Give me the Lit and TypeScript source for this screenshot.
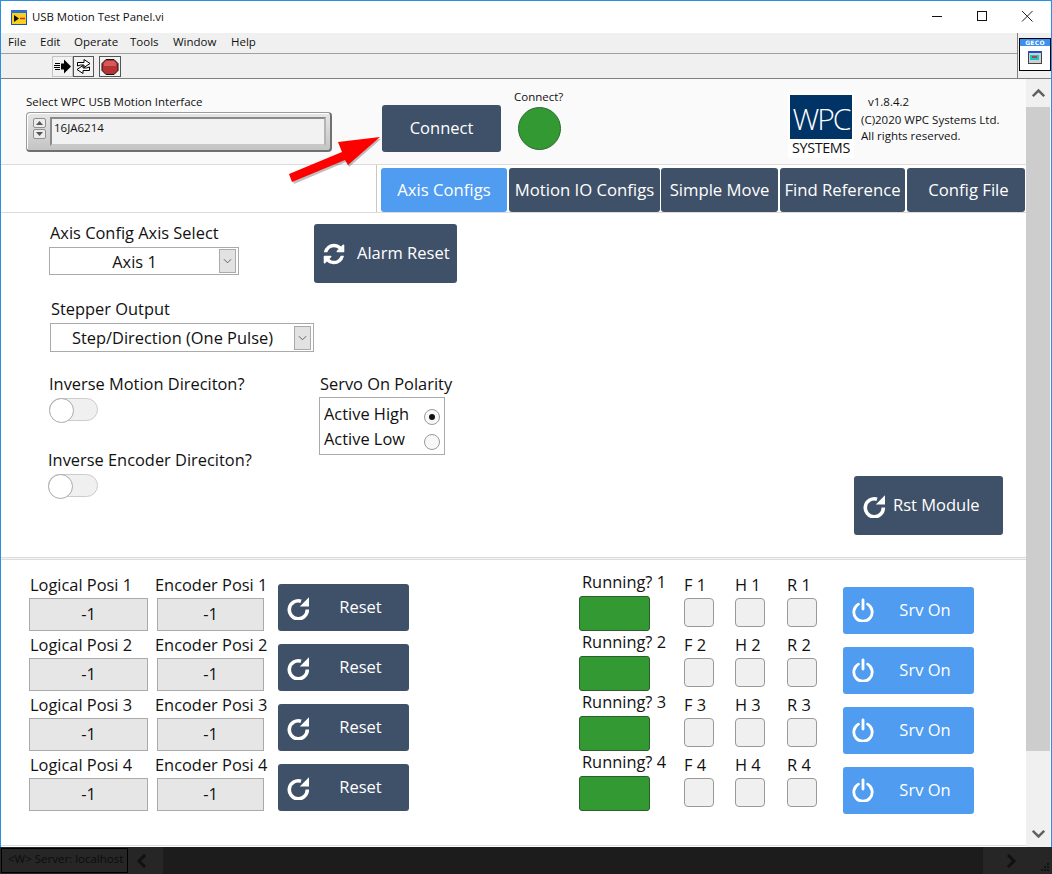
import { LitElement, html, css } from "lit";
import { customElement } from "lit/decorators.js";

const SYNC = "M1639 1056q0 5-1 7-64 268-268 434.5t-478 166.5q-146 0-282.5-55t-243.5-157l-129 129q-19 19-45 19t-45-19-19-45v-448q0-26 19-45t45-19h448q26 0 45 19t19 45-19 45l-137 137q71 66 161 102t187 36q134 0 250-65t186-179q11-17 53-117 8-23 30-23h192q13 0 22.5 9.5t9.5 22.5zm25-800v448q0 26-19 45t-45 19h-448q-26 0-45-19t-19-45 19-45l138-138q-148-137-349-137-134 0-250 65t-186 179q-11 17-53 117-8 23-30 23h-199q-13 0-22.5-9.5t-9.5-22.5v-7q65-268 270-434.5t480-166.5q146 0 284 55.5t245 156.5l130-129q19-19 45-19t45 19 19 45z";

const syncIcon = html`<svg class="ico-sync" viewBox="0 0 1792 1792" fill="#fff"><path d=${SYNC}></path></svg>`;
const repeatIcon = html`<svg class="ico-rep" viewBox="0 0 23 24"><path d="M20.3 13.5A9 9 0 1 1 14 5.2" fill="none" stroke="#fff" stroke-width="3.6"></path><path d="M22 1.2V10.5H12.8z" fill="#fff"></path></svg>`;
const powerIcon = html`<svg class="ico-power" viewBox="0 0 24 26" fill="none" stroke="#fff" stroke-width="3.1" stroke-linecap="round"><path d="M7 6.6a10 10 0 1 0 10 0"></path><path d="M12 2v10"></path></svg>`;
const chev = (pts: string, cls: string) => html`<svg class=${cls} viewBox="0 0 16 12" fill="none" stroke-width="3"><polyline points=${pts}></polyline></svg>`;

const SEL = html`<span class="sel-arrow"><svg viewBox="0 0 10 6" width="9" height="6" fill="none" stroke="#555" stroke-width="1"><polyline points="1,1 5,5 9,1"></polyline></svg></span>`;

@customElement("app-root")
export class AppRoot extends LitElement {
  static styles = css`
    :host { display: block; position: relative; width: 1052px; height: 874px; overflow: hidden; background: #fff;
      font-family: "Open Sans", "Noto Sans", sans-serif; color: #111; font-size: 16.4px; }
    * { box-sizing: border-box; }
    .app { display: flex; flex-direction: column; height: 874px; }
    .win { height: 847px; flex: none; border: 1px solid #2b8fe3; border-bottom: 0; display: flex; flex-direction: column; }

    .title { height: 32px; flex: none; display: flex; align-items: center; background: #fff; padding-left: 10px; }
    .title .app-ico { width: 16px; height: 16px; flex: none; }
    .title .name { margin-left: 5px; font-size: 11.4px; line-height: 16px; }
    .winbtns { margin-left: auto; display: flex; }
    .winbtns svg { width: 45px; height: 32px; display: block; }

    .bars { display: flex; flex: none; height: 46px; background: #f0f0f0; border-bottom: 1px solid #808080; }
    .bars-main { flex: 1; display: flex; flex-direction: column; }
    .menu { height: 21px; border-bottom: 1px solid #a0a0a0; display: grid; grid-template-columns: 32px 34px 56px 43px 58px auto; padding-left: 7px; font-size: 11.5px; line-height: 18px; }
    .tools { flex: 1; display: flex; padding: 2px 0 0 51px; }
    .tools .tb { height: 22px; display: block; }
    .geco-wrap { width: 34px; border-left: 1px solid #808080; padding: 5px 0 0 1px; flex: none; }
    .geco { width: 32px; height: 33px; border: 1px solid #000; background: #fff; display: flex; flex-direction: column; align-items: center; }
    .geco-h { width: 100%; height: 7px; background: #3a8ff0; color: #fff; font: bold 6px/7px "DejaVu Sans", sans-serif; text-align: center; letter-spacing: .3px; overflow: hidden; }
    .geco svg { margin-top: 5px; }

    .main { flex: 1; display: flex; min-height: 0; }
    .content { width: 1025px; flex: none; display: flex; flex-direction: column; background: #fff; }

    .head { height: 86px; flex: none; background: #fafafa; border-bottom: 1px solid #dcdcdc; display: flex; align-items: flex-start; padding-left: 25px; }
    .small { font-size: 11.5px; line-height: 16px; }
    .ring-block { width: 306px; margin-top: 15px; }
    .ring-label { height: 18px; line-height: 15px; white-space: nowrap; }
    .ring { height: 40px; border-radius: 4px; background: linear-gradient(180deg, #e6e6e6, #c4c4c4); border: 1px solid #9a9a9a; border-right: 2px solid #707070; border-bottom: 2px solid #707070; box-shadow: inset 1px 1px 0 #fff; display: flex; padding: 4px 4px 4px 6px; }
    .spin { width: 13px; display: flex; flex-direction: column; gap: 1px; margin-top: 1px; flex: none; }
    .spin span { width: 13px; height: 10px; background: #ececec; border: 1px solid #8f8f8f; border-radius: 2px; display: flex; align-items: center; justify-content: center; }
    .ring-input { flex: 1; margin-left: 4px; background: #f2f2f2; border: 2px solid #8a8a8a; border-right-color: #b5b5b5; border-bottom-color: #c8c8c8; padding: 1px 0 0 2px; height: 29px; line-height: 16px; }

    .btn { background: #3f5168; border-radius: 3px; color: #fff; display: flex; align-items: center; flex: none; font-weight: 500; font-size: 16.5px; white-space: nowrap; }
    .btn span { margin-bottom: 2px; }
    .connect { width: 119px; height: 47px; margin: 26px 0 0 50px; justify-content: center; }
    .led-block { width: 52px; margin: 9px 0 0 13px; flex: none; }
    .led-label { height: 18px; white-space: nowrap; line-height: 18px; }
    .led { width: 43px; height: 43px; border-radius: 50%; background: #339933; border: 1px solid #2b6b2b; margin: 1px 0 0 4px; }
    .logo { width: 66px; height: 66px; flex: none; margin: 13px 0 0 222px; background: #fff; padding: 3px 2px 0; }
    .logo-box { height: 44px; background: #003366; color: #fff; font: 300 30px/48px "Open Sans", sans-serif; letter-spacing: -2px; text-align: center; white-space: nowrap; overflow: hidden; }
    .logo-sub { text-align: center; font-size: 14.4px; line-height: 18px; letter-spacing: -.4px; white-space: nowrap; }
    .info { margin: 15px 0 0 7px; white-space: nowrap; }
    .info div { height: 16px; }
    .info .ver { padding-left: 7px; height: 18px; }

    .tabs { height: 48px; flex: none; display: flex; background: #fff; border-bottom: 1px solid #dcdcdc; }
    .tab-gap { width: 376px; flex: none; border-right: 1px solid #c8c8c8; margin-right: 4px; }
    .tab-list { display: flex; padding-top: 3px; }
    .tab { height: 44px; background: #3f5168; color: #fff; border-radius: 3px; display: flex; align-items: center; justify-content: center; font-size: 16.7px; font-weight: 500; white-space: nowrap; padding-bottom: 2px; }
    .tab.on { background: #4f9cf0; }
    .tab:last-child { padding-left: 5px; }

    .body { height: 344px; flex: none; padding: 11px 23px 0 48px; display: flex; flex-direction: column; }
    .row-a { display: flex; height: 59px; flex: none; }
    .lbl { height: 23px; line-height: 19px; white-space: nowrap; }
    .row-a .lbl { line-height: 17px; padding-left: 1px; }
    .axis { width: 190px; flex: none; }
    .select { height: 28px; border: 1px solid #aaa; background: #fff; display: flex; align-items: center; padding-right: 2px; white-space: nowrap; }
    .select-text { flex: 1; text-align: center; }
    .sel-arrow { width: 17px; height: 24px; background: #e2e2e2; border: 1px solid #aaa; display: flex; align-items: center; justify-content: center; flex: none; }
    .alarm { width: 143px; height: 59px; margin-left: 75px; padding-left: 8px; }
    .alarm span { margin-bottom: 2px; }
    .ico-sync { width: 24px; height: 24px; margin-right: 11px; flex: none; }
    .row-b { margin: 16px 0 0 1px; width: 264px; flex: none; }
    .row-b .lbl { height: 24px; padding-left: 1px; }
    .row-b .select { height: 29px; }
    .row-c { display: flex; margin-top: 21px; flex: none; }
    .col-l { width: 270px; flex: none; }
    .col-l .lbl { height: 25px; line-height: 22px; }
    .toggle { width: 49px; height: 23px; border-radius: 12px; background: #f0f0f0; border: 1px solid #ccc; position: relative; }
    .toggle::after { content: ""; position: absolute; left: -1px; top: -1px; width: 23px; height: 23px; border-radius: 50%; background: #fff; border: 1px solid #aaa; }
    .spacer { height: 28px; }
    .shift { margin-left: -1px; }
    .toggle.shift { width: 50px; }
    .col-r { width: 140px; flex: none; }
    .col-r .lbl { height: 24px; line-height: 22px; padding-left: 1px; }
    .radio-box { width: 126px; height: 58px; border: 1px solid #aaa; padding: 3px 4px 0 4px; background: #fff; }
    .radio-row { display: flex; justify-content: space-between; align-items: center; height: 25px; white-space: nowrap; }
    .radio { width: 16px; height: 16px; border-radius: 50%; border: 1px solid #999; background: #f8f8f8; display: flex; align-items: center; justify-content: center; flex: none; margin-top: 6px; }
    .radio.on::after { content: ""; width: 6px; height: 6px; border-radius: 50%; background: #111; }
    .rst { width: 149px; height: 59px; margin: 103px 0 0 auto; padding-left: 9px; }
    .rst span { margin-bottom: 2px; }
    .ico-rep { width: 23px; height: 24px; flex: none; }
    .rst .ico-rep { margin-right: 7px; }

    .divider { height: 3px; flex: none; border-top: 1px solid #dcdcdc; border-bottom: 1px solid #dcdcdc; background: #f4f4f4; }
    .bottom { height: 286px; flex: none; border-bottom: 1px solid #dcdcdc; padding: 11px 0 0 28px; display: flex; }
    .left-g { margin-top: 3px; width: 550px; flex: none; }
    .p-row { height: 60px; display: flex; }
    .p-col .lbl { height: 24px; line-height: 22px; padding-left: 1px; }
    .p-col.enc { margin-left: 9px; width: 107px; }
    .p-col.enc .lbl { margin-left: -2px; padding: 0; }
    .p-col.log { width: 119px; }
    .val { height: 33px; background: #e6e6e6; border: 1px solid #aaa; display: flex; align-items: center; justify-content: center; padding-bottom: 2px; }
    .reset { width: 131px; height: 47px; margin: 10px 0 0 14px; padding-left: 9px; }
    .btn-t { flex: 1; text-align: center; padding-left: 2px; }
    .r-row { height: 60px; display: flex; }
    .run { width: 105px; flex: none; }
    .run .lbl { height: 25px; line-height: 22px; padding-left: 3px; }
    .run-led { width: 71px; height: 35px; background: #339933; border: 1px solid #2b5f2b; border-radius: 3px; }
    .flag { flex: none; margin-top: 3px; }
    .flag .lbl { height: 24px; line-height: 22px; }
    .flag-box { width: 30px; height: 29px; background: #f0f0f0; border: 1px solid #999; border-radius: 4px; }
    .srv { width: 131px; height: 47px; margin-top: 16px; background: #4f9cf0; padding-left: 9px; }
    .ico-power { width: 22px; height: 24px; flex: none; margin-bottom: 2px; }

    .sbar { width: 24px; flex: none; background: #f0f0f0; display: flex; flex-direction: column; align-items: center; }
    .sb-btn { height: 28px; width: 100%; display: flex; align-items: center; justify-content: center; flex: none; }
    .sb-btn.dn { height: 26px; margin-top: auto; }
    .sb-thumb { width: 100%; height: 644px; background: #cdcdcd; flex: none; }
    .s-ico { width: 13px; height: 10px; stroke: #606060; }

    .status { height: 27px; flex: none; background: #1c1c1c; display: flex; align-items: center; }
    .st-l { width: 163px; height: 100%; background: #262626; display: flex; align-items: center; flex: none; padding-left: 1px; }
    .st-tab { width: 127px; height: 25px; border: 1px solid #000; color: #0c0c0c; font-size: 11.5px; line-height: 20px; padding-left: 6px; white-space: nowrap; flex: none; }
    .st-ico { width: 11px; height: 14px; stroke: #111; margin-left: 8px; }
    .st-r { margin-left: auto; width: 69px; height: 100%; background: #262626; display: flex; align-items: center; position: relative; padding-left: 15px; }
    .grip { position: absolute; right: 2px; bottom: 2px; }
    .arrow { position: absolute; left: 0; top: 0; pointer-events: none; }
  `;

  private pos(i: number) {
    return html`<div class="p-row">
      <div class="p-col log"><div class="lbl">Logical Posi ${i}</div><div class="val">-1</div></div>
      <div class="p-col enc"><div class="lbl">Encoder Posi ${i}</div><div class="val">-1</div></div>
      <div class="btn reset">${repeatIcon}<span class="btn-t">Reset</span></div>
    </div>`;
  }

  private run(i: number) {
    const flag = (n: string, w: number) => html`<div class="flag" style="width:${w}px"><div class="lbl">${n} ${i}</div><div class="flag-box"></div></div>`;
    return html`<div class="r-row">
      <div class="run"><div class="lbl">Running? ${i}</div><div class="run-led"></div></div>
      ${flag("F", 51)}${flag("H", 52)}${flag("R", 56)}
      <div class="btn srv">${powerIcon}<span class="btn-t">Srv On</span></div>
    </div>`;
  }

  render() {
    const tabs: [string, number, number][] = [["Axis Configs", 126, 0], ["Motion IO Configs", 151, 2], ["Simple Move", 117, 1], ["Find Reference", 125, 2], ["Config File", 118, 2]];
    return html`<div class="app">
      <div class="win">
        <div class="title">
          <svg class="app-ico" viewBox="0 0 16 16">
            <rect x="0.5" y="1.5" width="15" height="14" fill="#f6d21e" stroke="#1f4fb5"></rect>
            <rect x="0" y="1" width="16" height="3" fill="#2b6fd6"></rect>
            <path d="M3 6l5 3.5L3 13z" fill="#111"></path><path d="M9 9.5h5" stroke="#d22" stroke-width="1.5"></path>
          </svg>
          <span class="name">USB Motion Test Panel.vi</span>
          <div class="winbtns">
            <svg viewBox="0 0 45 32"><path d="M16 15.5h10" stroke="#111" fill="none"></path></svg>
            <svg viewBox="0 0 45 32"><rect x="16.5" y="10.5" width="9" height="9" stroke="#111" fill="none"></rect></svg>
            <svg viewBox="0 0 45 32"><path d="M16 10l10.5 10.5M26.5 10L16 20.5" stroke="#222" fill="none"></path></svg>
          </div>
        </div>
        <div class="bars">
          <div class="bars-main">
            <div class="menu"><span>File</span><span>Edit</span><span>Operate</span><span>Tools</span><span>Window</span><span>Help</span></div>
            <div class="tools">
              <svg class="tb" width="70" height="22" viewBox="0 0 70 22">
                <rect x="0.5" y="0.5" width="20" height="20" fill="#f2f2f2" stroke="#c4c4c4"></rect>
                <path d="M9 7.5h3V3.5L19 10.5L12 17.5V13.5H9z" fill="#000"></path>
                <path d="M3 7.5h5M2 9.5h6M2 11.5h6M3 13.5h5" stroke="#000" stroke-width="1.2"></path>
                <rect x="21.5" y="0.5" width="20" height="20" fill="#f2f2f2" stroke="#555"></rect>
                <path d="M25.5 10V6.5H32V3.5L38 7.5L32 11.5V9H28.5z" fill="#fff" stroke="#000"></path>
                <path d="M37.5 11V14.5H31V17.5L25 13.5L31 9.5V12H34.5z" fill="#fff" stroke="#000"></path>
                <rect x="47.5" y="0.5" width="21" height="20" fill="#f2f2f2" stroke="#555"></rect>
                <path d="M54 3.5h8l4 4v7l-4 4h-8l-4-4v-7z" fill="#b73232" stroke="#111"></path>
                <path d="M54 5h8l2 2v3H52V7z" fill="#d65a5a"></path>
              </svg>
            </div>
          </div>
          <div class="geco-wrap">
            <div class="geco"><div class="geco-h">GECO</div>
              <svg width="14" height="13" viewBox="0 0 14 13">
                <rect x="0.5" y="0.5" width="13" height="12" fill="#cfcfcf" stroke="#444"></rect>
                <rect x="0" y="0" width="14" height="2" fill="#1f4fd0"></rect>
                <rect x="2" y="4" width="9" height="5" fill="#19c7c7"></rect>
                <path d="M4 6h5" stroke="#c22" stroke-width="1.5"></path>
              </svg>
            </div>
          </div>
        </div>
        <div class="main">
          <div class="content">
            <div class="head">
              <div class="ring-block">
                <div class="ring-label small">Select WPC USB Motion Interface</div>
                <div class="ring">
                  <div class="spin">
                    <span><svg width="7" height="4" viewBox="0 0 7 4"><path d="M3.5 0L7 4H0z" fill="#555"></path></svg></span>
                    <span><svg width="7" height="4" viewBox="0 0 7 4"><path d="M0 0h7L3.5 4z" fill="#555"></path></svg></span>
                  </div>
                  <div class="ring-input small">16JA6214</div>
                </div>
              </div>
              <div class="btn connect"><span>Connect</span></div>
              <div class="led-block"><div class="led-label small">Connect?</div><div class="led"></div></div>
              <div class="logo"><div class="logo-box">WPC</div><div class="logo-sub">SYSTEMS</div></div>
              <div class="info small"><div class="ver">v1.8.4.2</div><div>(C)2020 WPC Systems Ltd.</div><div>All rights reserved.</div></div>
            </div>
            <div class="tabs">
              <div class="tab-gap"></div>
              <div class="tab-list">
                ${tabs.map(([t, w, m], i) => html`<div class="tab ${i === 0 ? "on" : ""}" style="width:${w}px;margin-left:${m}px">${t}</div>`)}
              </div>
            </div>
            <div class="body">
              <div class="row-a">
                <div class="axis">
                  <div class="lbl">Axis Config Axis Select</div>
                  <div class="select"><span class="select-text">Axis 1</span>${SEL}</div>
                </div>
                <div class="btn alarm">${syncIcon}<span>Alarm Reset</span></div>
              </div>
              <div class="row-b">
                <div class="lbl">Stepper Output</div>
                <div class="select"><span class="select-text">Step/Direction (One Pulse)</span>${SEL}</div>
              </div>
              <div class="row-c">
                <div class="col-l">
                  <div class="lbl">Inverse Motion Direciton?</div>
                  <div class="toggle"></div>
                  <div class="spacer"></div>
                  <div class="lbl shift">Inverse Encoder Direciton?</div>
                  <div class="toggle shift"></div>
                </div>
                <div class="col-r">
                  <div class="lbl">Servo On Polarity</div>
                  <div class="radio-box">
                    <div class="radio-row"><span>Active High</span><span class="radio on"></span></div>
                    <div class="radio-row"><span>Active Low</span><span class="radio"></span></div>
                  </div>
                </div>
                <div class="btn rst">${repeatIcon}<span>Rst Module</span></div>
              </div>
            </div>
            <div class="divider"></div>
            <div class="bottom">
              <div class="left-g">${[1, 2, 3, 4].map((i) => this.pos(i))}</div>
              <div class="right-g">${[1, 2, 3, 4].map((i) => this.run(i))}</div>
            </div>
          </div>
          <div class="sbar">
            <div class="sb-btn">${chev("1,10 8,3 15,10", "s-ico")}</div>
            <div class="sb-thumb"></div>
            <div class="sb-btn dn">${chev("1,2 8,9 15,2", "s-ico")}</div>
          </div>
        </div>
      </div>
      <div class="status">
        <div class="st-l">
          <div class="st-tab">&lt;W&gt; Server: localhost</div>
          <svg class="st-ico" viewBox="0 0 11 14" fill="none" stroke-width="3"><polyline points="9,1 3,7 9,13"></polyline></svg>
        </div>
        <div class="st-r">
          <svg class="st-ico" viewBox="0 0 11 14" fill="none" stroke-width="3"><polyline points="2,1 8,7 2,13"></polyline></svg>
          <svg class="grip" width="10" height="10" viewBox="0 0 10 10" fill="#111"><rect x="7" y="1" width="2" height="2"></rect><rect x="4" y="4" width="2" height="2"></rect><rect x="7" y="4" width="2" height="2"></rect><rect x="1" y="7" width="2" height="2"></rect><rect x="4" y="7" width="2" height="2"></rect><rect x="7" y="7" width="2" height="2"></rect></svg>
        </div>
      </div>
      <svg class="arrow" width="1052" height="874" viewBox="0 0 1052 874">
        <polygon points="291,176 344,154 339,144 381,139 349,167 346,162 294,184" fill="#000" opacity=".25"></polygon>
        <polygon points="289,174 342,152 338,142 380,137 348,165 345,160 292,182" fill="#f00"></polygon>
      </svg>
    </div>`;
  }
}
